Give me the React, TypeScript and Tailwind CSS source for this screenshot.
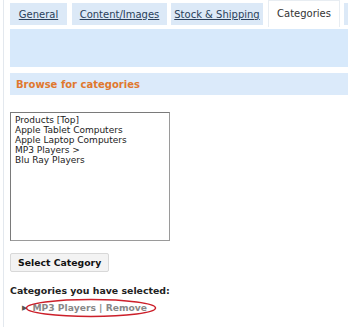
import React from 'react';

const tabs = [
  { label: 'General', cls: 'w-[57px]' },
  { label: 'Content/Images', cls: 'w-[95px] ml-[5px]' },
  { label: 'Stock & Shipping', cls: 'w-[92px] ml-[4px]' },
];
const items = ['Products [Top]', 'Apple Tablet Computers', 'Apple Laptop Computers', 'MP3 Players >', 'Blu Ray Players'];

export default function App() {
  return (
    <div className="w-[348px] h-[327px] overflow-hidden bg-white pl-[3px] font-['DejaVu_Sans',Verdana,sans-serif]">
      <div className="h-full border-l border-[#e3e8ee] pl-[6px]">
        {/* Tabs */}
        <div className="flex items-end text-[10px] whitespace-nowrap h-[27px]">
          {tabs.map(t => (
            <div key={t.label} className={`${t.cls} shrink-0 h-[22px] mb-[2px] flex items-center justify-center bg-[#dce9f7] text-[#2a3f5a] underline`}>
              {t.label}
            </div>
          ))}
          <div className="ml-[5px] w-[72px] shrink-0 h-[27px] pb-[2px] flex items-center justify-center bg-white border-t border-x border-[#e8edf2] text-[#333]">
            Categories
          </div>
          <div className="ml-[4px] h-[22px] mb-[2px] w-[20px] shrink-0 bg-[#dce9f7]" />
        </div>

        {/* Blue panel */}
        <div className="mt-[2px] h-[38px] bg-[#d7e9fb]" />

        {/* Browse bar */}
        <div className="mt-[6px] h-[22px] bg-[#dbeafa] flex items-center pl-[6px] text-[10px] font-bold text-[#e0782e]">
          Browse for categories
        </div>

        {/* Listbox */}
        <div className="mt-[17px] w-[160px] h-[129px] border border-[#9a9a9a] border-t-[#7a7a7a] border-l-[#7a7a7a] pl-[4px] pt-[2px] text-[9px] leading-[10px] text-[#222]">
          {items.map(i => (
            <div key={i}>{i}</div>
          ))}
        </div>

        {/* Button */}
        <button className="mt-[12px] h-[19px] px-[7px] bg-[#f3f3f3] border border-[#d8d8d8] rounded-[2px] text-[9.3px] font-bold text-[#111] flex items-center">
          Select Category
        </button>

        <div className="mt-[12px] text-[9.4px] font-bold text-[#222]">Categories you have selected:</div>

        <div className="relative mt-[3px] ml-[12px] flex items-center gap-[5px] text-[9.2px] font-bold text-[#888] h-[14px]">
          <span className="text-[#555] text-[7px]">▶</span>
          <span>MP3 Players | Remove</span>
          <svg className="absolute left-[3px] top-[-3px]" width="132" height="20" viewBox="0 0 132 20">
            <ellipse cx="66" cy="10" rx="64.5" ry="8.5" fill="none" stroke="#cc1f2a" strokeWidth="1.5" />
          </svg>
        </div>
      </div>
    </div>
  );
}
